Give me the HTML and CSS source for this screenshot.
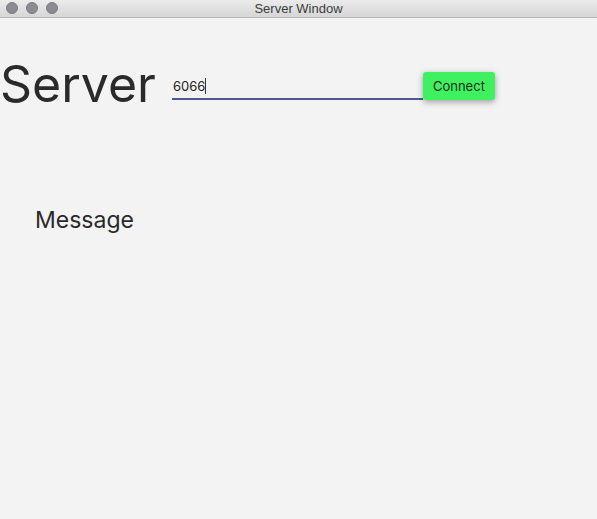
FILE: index.html
```
<!DOCTYPE html>
<html>
<head>
<meta charset="utf-8">
<link rel="stylesheet" href="styles.css">
</head>
<body>
<div class="titlebar">
  <div class="lights"><span class="light"></span><span class="light"></span><span class="light"></span></div>
  <div class="title">Server Window</div>
</div>
<main class="content">
  <div class="row">
    <h1 class="heading">Server</h1>
    <div class="field"><span class="value">6066</span><span class="caret"></span></div>
    <button class="connect">Connect</button>
  </div>
  <h2 class="message">Message</h2>
</main>
</body>
</html>
```
FILE: styles.css
```
html, body {
  margin: 0;
  padding: 0;
  height: 100%;
}
body {
  background: #f3f3f3;
  font-family: Inter, "Liberation Sans", Arial, sans-serif;
  color: #2a2a2a;
  overflow: hidden;
}
.titlebar {
  position: relative;
  height: 17px;
  background: linear-gradient(#ebebeb, #d6d6d6);
  border-bottom: 1px solid #b4b4b4;
  display: flex;
  align-items: center;
  justify-content: center;
}
.lights {
  position: absolute;
  left: 6px;
  top: 2px;
  display: flex;
  gap: 8px;
}
.light {
  width: 12px;
  height: 12px;
  border-radius: 50%;
  background: #8c8b90;
  box-sizing: border-box;
  border: 1px solid #7d7c81;
}
.title {
  font-size: 13px;
  color: #3c3c3c;
  font-family: "Liberation Sans", Arial, sans-serif;
}
.content {
  display: flex;
  flex-direction: column;
}
.row {
  display: flex;
  align-items: flex-end;
  margin-top: 36px;
  height: 64px;
}
.heading {
  margin: 0 0 7px 0;
  font-weight: normal;
  font-size: 50px;
  line-height: 54px;
  color: #2a2a2a;
}
.field {
  margin-left: 16px;
  width: 251px;
  height: 26px;
  border-bottom: 2px solid #4b5b92;
  display: flex;
  align-items: center;
  margin-bottom: 18px;
  box-sizing: border-box;
  padding-left: 1px;
  padding-bottom: 1px;
}
.value {
  font-size: 13px;
  color: #222;
}
.caret {
  width: 1px;
  height: 16px;
  background: #333;
}
.connect {
  margin: 0 0 18px 0;
  width: 72px;
  height: 28px;
  border: none;
  border-radius: 3px;
  background: #3ef25f;
  color: #1e2e1e;
  font-family: Inter, "Liberation Sans", Arial, sans-serif;
  font-size: 13px;
  padding: 0;
  box-shadow: 0 2px 6px rgba(0,0,0,0.35);
}
.message {
  margin: 88px 0 0 35px;
  font-weight: normal;
  font-size: 23px;
  line-height: 28px;
  color: #2a2a2a;
}
```
